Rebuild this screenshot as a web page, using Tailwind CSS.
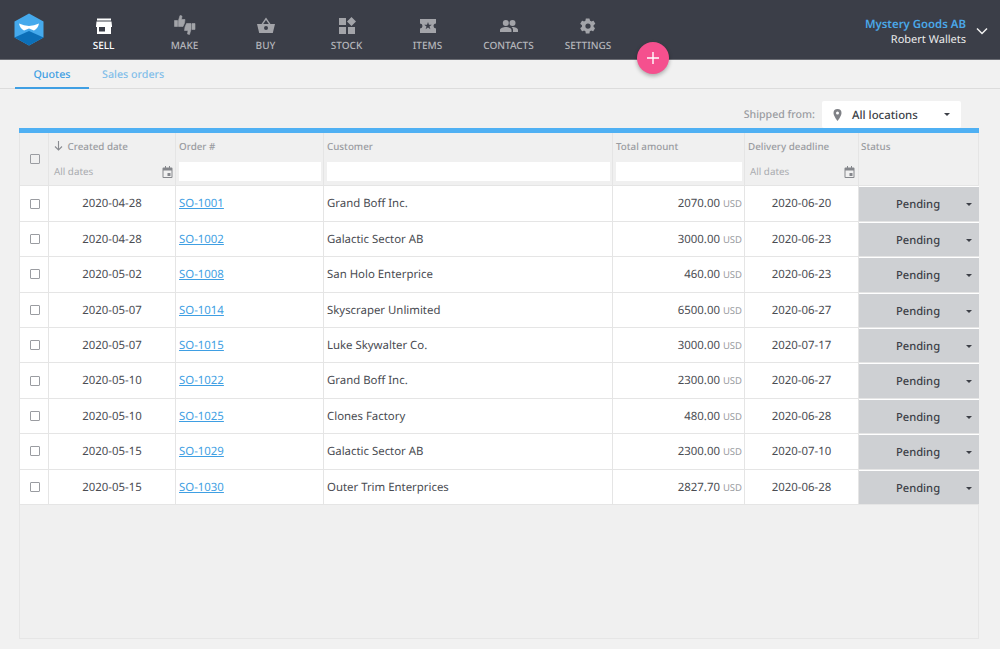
<!DOCTYPE html>
<html><head><meta charset="utf-8"><script src="https://cdn.jsdelivr.net/npm/@tailwindcss/browser@4"></script></head>
<body class="w-[1000px] h-[649px] overflow-hidden bg-[#f1f1f1] font-['Noto_Sans','Open_Sans',sans-serif] [text-rendering:geometricPrecision] text-[#3c3f47] relative">
<header class="h-[60px] bg-[#3b3e48] border-b border-[#6b6d74] flex items-start relative">
  <div class="w-[60px] h-full flex items-center justify-center pr-[2px]">
    <svg width="32" height="33" viewBox="0 0 32 33"><path d="M16 .5 30.500 8.500V24.500L16 32.500 1.500 24.500V8.500Z" fill="#45a9ec"/><path d="M1.500 24.500 16 18 30.500 24.500 16 32.500Z" fill="#0c6fb8"/><path d="M6 10.500 Q11 12.500 16 13 Q21 12.500 26 10.500 Q25 15.500 21 17.500 L16 15.500 L11 17.500 Q7 15.500 6 10.500Z" fill="#fff"/></svg>
  </div>
  <nav class="flex text-[10px] font-medium text-[#b4b5ba] leading-none">
    <a class="w-[81px] ml-[3px] flex flex-col items-center pt-[17px] text-white"><svg width="18" height="18" viewBox="0 0 18 18" fill="#fff"><path d="M2 1.500h14v2H2zM1.500 4.500h15L17 9v1H16v7H2v-7H1V9zM4 10v4.500h6V10z" fill-rule="evenodd"/></svg><span class="mt-[5px]">SELL</span></a>
    <a class="w-[81px] flex flex-col items-center pt-[15px]"><svg width="22" height="20" viewBox="0 0 22 20" fill="#a3a4a9"><path d="M.5 5.500h3V11.500h-3zM4.500 11.500V5.500L6 .5 8 1 7.500 4.500h3.500l-.5 3.500-1.500 3.500z" stroke="#a3a4a9" stroke-width=".6" stroke-linejoin="round"/><path d="M21 8.500h-3V14.500h3zM17 8.500V14.500L15.500 19.500 13.500 19 14 15.500H10.500l.5-3.500 1.500-3.500z" stroke="#a3a4a9" stroke-width=".6" stroke-linejoin="round"/></svg><span class="mt-[5px]">MAKE</span></a>
    <a class="w-[81px] flex flex-col items-center pt-[17px]"><svg width="18" height="18" viewBox="0 0 18 18" fill="#a3a4a9"><path d="M0 7h4.500L9 .5 13.500 7H18l-2.200 9H2.200zM6.200 7h5.600L9 3zM9 9a2 2 0 1 0 0 4 2 2 0 0 0 0-4z" fill-rule="evenodd"/></svg><span class="mt-[5px]">BUY</span></a>
    <a class="w-[81px] flex flex-col items-center pt-[17px]"><svg width="18" height="18" viewBox="0 0 18 18" fill="#a3a4a9"><path d="M1 1h7v7H1zM1 10h7v7H1zM10 10h7v7h-7zM13.500 0 18 4.500 13.500 9 9 4.500z"/></svg><span class="mt-[5px]">STOCK</span></a>
    <a class="w-[81px] flex flex-col items-center pt-[17px]"><svg width="18" height="18" viewBox="0 0 18 18" fill="#a3a4a9"><path d="M1 2h16v4.500a2.500 2.500 0 0 0 0 5V16H1v-4.500a2.500 2.500 0 0 0 0-5zM9 5 8 7.800H5.200l2.300 1.700-.9 2.800L9 10.600l2.400 1.700-.9-2.800 2.300-1.700H10z" fill-rule="evenodd"/></svg><span class="mt-[5px]">ITEMS</span></a>
    <a class="w-[81px] flex flex-col items-center pt-[17px]"><svg width="18" height="18" viewBox="0 0 18 18" fill="#a3a4a9"><circle cx="5.800" cy="6" r="3"/><circle cx="12.500" cy="6" r="3"/><path d="M0 15v-2c0-2 3.500-3 5.800-3s5.700 1 5.700 3v2zM13 15v-2c0-1.200-.5-2.200-1.500-3 .4-.1.800-.1 1.200-.1 2.200 0 5.300 1 5.300 3.100v2z"/></svg><span class="mt-[5px]">CONTACTS</span></a>
    <a class="w-[78px] flex flex-col items-center pt-[17px]"><svg width="18" height="18" viewBox="0 0 24 24" fill="#a3a4a9"><path d="M19.400 13c.1-.3.100-.7.100-1s0-.7-.1-1l2.100-1.600c.2-.2.200-.4.100-.6l-2-3.500c-.1-.2-.4-.3-.6-.2l-2.500 1c-.5-.4-1.100-.7-1.700-1L14 2.400c0-.2-.2-.4-.5-.4h-4c-.2 0-.5.2-.5.400l-.4 2.700c-.6.200-1.200.6-1.700 1l-2.500-1c-.2-.1-.5 0-.6.200l-2 3.500c-.1.200 0 .4.100.6L4 11c0 .3-.1.700-.1 1s0 .7.100 1l-2.100 1.600c-.2.200-.2.400-.1.600l2 3.500c.1.200.4.300.6.200l2.500-1c.5.400 1.100.7 1.700 1l.4 2.700c0 .2.300.4.500.4h4c.3 0 .5-.2.500-.4l.4-2.700c.6-.2 1.200-.6 1.700-1l2.500 1c.2.100.5 0 .6-.2l2-3.500c.1-.2 0-.4-.1-.6zM12 15.500a3.500 3.500 0 1 1 0-7 3.500 3.500 0 0 1 0 7z"/></svg><span class="mt-[5px]">SETTINGS</span></a>
  </nav>
  <div class="ml-auto flex items-center pt-[18px] pr-[12px]">
    <div class="text-right leading-[15px] mr-[10px] mt-[-1px]"><div class="text-[#4aa8e8] font-semibold text-[11.400px]">Mystery Goods AB</div><div class="text-[#ececed] text-[11px]">Robert Wallets</div></div>
    <svg class="-mt-[4px]" width="12" height="8" viewBox="0 0 12 8" fill="none" stroke="#f1f1f1" stroke-width="1.500"><path d="M1 1.500 6 6.500 11 1.500"/></svg>
  </div>
</header>
<button class="absolute left-[637px] top-[42px] w-8 h-8 rounded-full bg-[#f5508e] shadow-[0_2px_4px_rgba(0,0,0,.3)] flex items-center justify-center"><svg width="12" height="12" viewBox="0 0 12 12" stroke="#fff" stroke-width="1.400"><path d="M6 0v12M0 6h12"/></svg></button>
<div class="h-[29px] border-b border-[#dcdcdc] pl-[15px] flex text-[10.700px] font-medium">
  <a class="w-[74px] h-[29px] border-b-[2px] border-[#3f9fe3] text-[#3f9fe3] text-center leading-[31px]">Quotes</a>
  <a class="ml-[13px] text-[#82bee9] leading-[31px]">Sales orders</a>
</div>
<div class="h-[39px] flex items-end justify-end pr-[39px]">
  <span class="text-[10.600px] font-medium text-[#9a9ca1] mr-[7px] leading-[29px] h-[27px]">Shipped from:</span>
  <div class="w-[139px] h-[27px] bg-white rounded-[2px] flex items-center pl-[11px] pr-[11px] text-[#3c3f47] text-[11.400px] font-medium">
    <svg width="9" height="12" viewBox="0 0 9 12" fill="#7f8186"><path d="M4.500 0A4 4 0 0 0 .5 4C.5 7 4.500 12 4.500 12S8.500 7 8.500 4A4 4 0 0 0 4.500 0zM4.500 5.500a1.500 1.500 0 1 1 0-3 1.500 1.500 0 0 1 0 3z"/></svg>
    <span class="ml-[10px] mt-[2px]">All locations</span><span class="ml-auto w-0 h-0 border-x-[3px] border-x-transparent border-t-[3px] border-t-[#3c3f47]"></span>
  </div>
</div>
<main class="mx-[19px] w-[960px] h-[511px] bg-[#f0f0f0] border-t-[5px] border-[#4fb0f3] shadow-[inset_-1px_0_#e6e6e6,inset_1px_0_#e6e6e6,inset_0_-1px_#e6e6e6]">
  <div class="grid grid-cols-[30px_127px_148px_289px_132px_114px_120px] h-[53.400px] text-[9.800px] font-medium text-[#9a9ca1] border-b border-[#e5e5e5] leading-none">
    <div class="border-x border-[#e5e5e5] flex items-center justify-center pl-[1px]"><span class="w-[10px] h-[10px] border-[1.500px] border-[#9a9ca1] rounded-[1px]"></span></div>
    <div class="border-r border-[#e5e5e5] pl-[5px] pr-[2px] flex flex-col"><div class="h-[27px] flex items-center"><svg class="-mt-[1px]" width="9" height="10" viewBox="0 0 9 10" fill="none" stroke="#8a8c91" stroke-width="1.100"><path d="M4.500 0v9M1 5.500 4.500 9 8 5.500"/></svg><span class="ml-[4.500px]">Created date</span></div><div class="flex items-center justify-between h-[23px] font-normal text-[#a9abaf]"><span>All dates</span><svg width="11" height="12" viewBox="0 0 11 12" fill="#85878c"><path d="M1.500 1.500H3V0h1v1.500h3V0h1v1.500h1.500a1 1 0 0 1 1 1V11a1 1 0 0 1-1 1h-8a1 1 0 0 1-1-1V2.500a1 1 0 0 1 1-1zM1.500 4.500V11h8V4.500zM5.500 7h3v3h-3z" fill-rule="evenodd"/></svg></div></div>
    <div class="border-r border-[#e5e5e5] pl-[3px] pr-[2px] flex flex-col"><div class="h-[27px] mb-[2px] flex items-center">Order #</div><div class="h-[19px] bg-white"></div></div>
    <div class="border-r border-[#e5e5e5] pl-[3px] pr-[2px] flex flex-col"><div class="h-[27px] mb-[2px] flex items-center">Customer</div><div class="h-[19px] bg-white"></div></div>
    <div class="border-r border-[#e5e5e5] pl-[3px] pr-[2px] flex flex-col"><div class="h-[27px] mb-[2px] flex items-center">Total amount</div><div class="h-[19px] bg-white"></div></div>
    <div class="border-r border-[#e5e5e5] pl-[3px] pr-[3px] flex flex-col"><div class="h-[27px] flex items-center">Delivery deadline</div><div class="flex items-center justify-between h-[23px] font-normal text-[#a9abaf] pl-[2px]"><span>All dates</span><svg width="11" height="12" viewBox="0 0 11 12" fill="#85878c"><path d="M1.500 1.500H3V0h1v1.500h3V0h1v1.500h1.500a1 1 0 0 1 1 1V11a1 1 0 0 1-1 1h-8a1 1 0 0 1-1-1V2.500a1 1 0 0 1 1-1zM1.500 4.500V11h8V4.500zM5.500 7h3v3h-3z" fill-rule="evenodd"/></svg></div></div>
    <div class="border-r border-[#e5e5e5] px-[2px] flex flex-col"><div class="h-[27px] flex items-center">Status</div></div>
  </div>
  <div class="text-[11.400px] text-[#4a4c52]">
    <div class="grid grid-cols-[30px_127px_148px_289px_132px_114px_120px] grid-rows-[34.400px] h-[35.400px] bg-white border-b border-[#e5e5e5] items-stretch leading-[36px]"><div class="border-x border-[#e5e5e5] flex items-center justify-center pl-[1px]"><span class="w-[10px] h-[10px] border-[1.500px] border-[#9a9ca1] rounded-[1px]"></span></div><div class="border-r border-[#e5e5e5] text-center">2020-04-28</div><div class="border-r border-[#e5e5e5] pl-[3px]"><a class="text-[#3f9fe3] underline">SO-1001</a></div><div class="border-r border-[#e5e5e5] pl-[3px]">Grand Boff Inc.</div><div class="border-r border-[#e5e5e5] text-right pr-[2px]">2070.00 <span class="text-[9.500px] text-[#9a9ca1]">USD</span></div><div class="border-r border-[#e5e5e5] text-center">2020-06-20</div><div class="bg-[#ced0d3] mt-[1px] flex items-center justify-center relative font-medium text-[11.200px] text-[#3c3f47] leading-none pr-[2px] pt-[2px]">Pending<span class="absolute right-[7px] top-[16px] border-x-[3px] border-x-transparent border-t-[3px] border-t-[#3c3f47]"></span></div></div>
    <div class="grid grid-cols-[30px_127px_148px_289px_132px_114px_120px] grid-rows-[34.400px] h-[35.400px] bg-white border-b border-[#e5e5e5] items-stretch leading-[36px]"><div class="border-x border-[#e5e5e5] flex items-center justify-center pl-[1px]"><span class="w-[10px] h-[10px] border-[1.500px] border-[#9a9ca1] rounded-[1px]"></span></div><div class="border-r border-[#e5e5e5] text-center">2020-04-28</div><div class="border-r border-[#e5e5e5] pl-[3px]"><a class="text-[#3f9fe3] underline">SO-1002</a></div><div class="border-r border-[#e5e5e5] pl-[3px]">Galactic Sector AB</div><div class="border-r border-[#e5e5e5] text-right pr-[2px]">3000.00 <span class="text-[9.500px] text-[#9a9ca1]">USD</span></div><div class="border-r border-[#e5e5e5] text-center">2020-06-23</div><div class="bg-[#ced0d3] mt-[1px] flex items-center justify-center relative font-medium text-[11.200px] text-[#3c3f47] leading-none pr-[2px] pt-[2px]">Pending<span class="absolute right-[7px] top-[16px] border-x-[3px] border-x-transparent border-t-[3px] border-t-[#3c3f47]"></span></div></div>
    <div class="grid grid-cols-[30px_127px_148px_289px_132px_114px_120px] grid-rows-[34.400px] h-[35.400px] bg-white border-b border-[#e5e5e5] items-stretch leading-[36px]"><div class="border-x border-[#e5e5e5] flex items-center justify-center pl-[1px]"><span class="w-[10px] h-[10px] border-[1.500px] border-[#9a9ca1] rounded-[1px]"></span></div><div class="border-r border-[#e5e5e5] text-center">2020-05-02</div><div class="border-r border-[#e5e5e5] pl-[3px]"><a class="text-[#3f9fe3] underline">SO-1008</a></div><div class="border-r border-[#e5e5e5] pl-[3px]">San Holo Enterprice</div><div class="border-r border-[#e5e5e5] text-right pr-[2px]">460.00 <span class="text-[9.500px] text-[#9a9ca1]">USD</span></div><div class="border-r border-[#e5e5e5] text-center">2020-06-23</div><div class="bg-[#ced0d3] mt-[1px] flex items-center justify-center relative font-medium text-[11.200px] text-[#3c3f47] leading-none pr-[2px] pt-[2px]">Pending<span class="absolute right-[7px] top-[16px] border-x-[3px] border-x-transparent border-t-[3px] border-t-[#3c3f47]"></span></div></div>
    <div class="grid grid-cols-[30px_127px_148px_289px_132px_114px_120px] grid-rows-[34.400px] h-[35.400px] bg-white border-b border-[#e5e5e5] items-stretch leading-[36px]"><div class="border-x border-[#e5e5e5] flex items-center justify-center pl-[1px]"><span class="w-[10px] h-[10px] border-[1.500px] border-[#9a9ca1] rounded-[1px]"></span></div><div class="border-r border-[#e5e5e5] text-center">2020-05-07</div><div class="border-r border-[#e5e5e5] pl-[3px]"><a class="text-[#3f9fe3] underline">SO-1014</a></div><div class="border-r border-[#e5e5e5] pl-[3px]">Skyscraper Unlimited</div><div class="border-r border-[#e5e5e5] text-right pr-[2px]">6500.00 <span class="text-[9.500px] text-[#9a9ca1]">USD</span></div><div class="border-r border-[#e5e5e5] text-center">2020-06-27</div><div class="bg-[#ced0d3] mt-[1px] flex items-center justify-center relative font-medium text-[11.200px] text-[#3c3f47] leading-none pr-[2px] pt-[2px]">Pending<span class="absolute right-[7px] top-[16px] border-x-[3px] border-x-transparent border-t-[3px] border-t-[#3c3f47]"></span></div></div>
    <div class="grid grid-cols-[30px_127px_148px_289px_132px_114px_120px] grid-rows-[34.400px] h-[35.400px] bg-white border-b border-[#e5e5e5] items-stretch leading-[36px]"><div class="border-x border-[#e5e5e5] flex items-center justify-center pl-[1px]"><span class="w-[10px] h-[10px] border-[1.500px] border-[#9a9ca1] rounded-[1px]"></span></div><div class="border-r border-[#e5e5e5] text-center">2020-05-07</div><div class="border-r border-[#e5e5e5] pl-[3px]"><a class="text-[#3f9fe3] underline">SO-1015</a></div><div class="border-r border-[#e5e5e5] pl-[3px]">Luke Skywalter Co.</div><div class="border-r border-[#e5e5e5] text-right pr-[2px]">3000.00 <span class="text-[9.500px] text-[#9a9ca1]">USD</span></div><div class="border-r border-[#e5e5e5] text-center">2020-07-17</div><div class="bg-[#ced0d3] mt-[1px] flex items-center justify-center relative font-medium text-[11.200px] text-[#3c3f47] leading-none pr-[2px] pt-[2px]">Pending<span class="absolute right-[7px] top-[16px] border-x-[3px] border-x-transparent border-t-[3px] border-t-[#3c3f47]"></span></div></div>
    <div class="grid grid-cols-[30px_127px_148px_289px_132px_114px_120px] grid-rows-[34.400px] h-[35.400px] bg-white border-b border-[#e5e5e5] items-stretch leading-[36px]"><div class="border-x border-[#e5e5e5] flex items-center justify-center pl-[1px]"><span class="w-[10px] h-[10px] border-[1.500px] border-[#9a9ca1] rounded-[1px]"></span></div><div class="border-r border-[#e5e5e5] text-center">2020-05-10</div><div class="border-r border-[#e5e5e5] pl-[3px]"><a class="text-[#3f9fe3] underline">SO-1022</a></div><div class="border-r border-[#e5e5e5] pl-[3px]">Grand Boff Inc.</div><div class="border-r border-[#e5e5e5] text-right pr-[2px]">2300.00 <span class="text-[9.500px] text-[#9a9ca1]">USD</span></div><div class="border-r border-[#e5e5e5] text-center">2020-06-27</div><div class="bg-[#ced0d3] mt-[1px] flex items-center justify-center relative font-medium text-[11.200px] text-[#3c3f47] leading-none pr-[2px] pt-[2px]">Pending<span class="absolute right-[7px] top-[16px] border-x-[3px] border-x-transparent border-t-[3px] border-t-[#3c3f47]"></span></div></div>
    <div class="grid grid-cols-[30px_127px_148px_289px_132px_114px_120px] grid-rows-[34.400px] h-[35.400px] bg-white border-b border-[#e5e5e5] items-stretch leading-[36px]"><div class="border-x border-[#e5e5e5] flex items-center justify-center pl-[1px]"><span class="w-[10px] h-[10px] border-[1.500px] border-[#9a9ca1] rounded-[1px]"></span></div><div class="border-r border-[#e5e5e5] text-center">2020-05-10</div><div class="border-r border-[#e5e5e5] pl-[3px]"><a class="text-[#3f9fe3] underline">SO-1025</a></div><div class="border-r border-[#e5e5e5] pl-[3px]">Clones Factory</div><div class="border-r border-[#e5e5e5] text-right pr-[2px]">480.00 <span class="text-[9.500px] text-[#9a9ca1]">USD</span></div><div class="border-r border-[#e5e5e5] text-center">2020-06-28</div><div class="bg-[#ced0d3] mt-[1px] flex items-center justify-center relative font-medium text-[11.200px] text-[#3c3f47] leading-none pr-[2px] pt-[2px]">Pending<span class="absolute right-[7px] top-[16px] border-x-[3px] border-x-transparent border-t-[3px] border-t-[#3c3f47]"></span></div></div>
    <div class="grid grid-cols-[30px_127px_148px_289px_132px_114px_120px] grid-rows-[34.400px] h-[35.400px] bg-white border-b border-[#e5e5e5] items-stretch leading-[36px]"><div class="border-x border-[#e5e5e5] flex items-center justify-center pl-[1px]"><span class="w-[10px] h-[10px] border-[1.500px] border-[#9a9ca1] rounded-[1px]"></span></div><div class="border-r border-[#e5e5e5] text-center">2020-05-15</div><div class="border-r border-[#e5e5e5] pl-[3px]"><a class="text-[#3f9fe3] underline">SO-1029</a></div><div class="border-r border-[#e5e5e5] pl-[3px]">Galactic Sector AB</div><div class="border-r border-[#e5e5e5] text-right pr-[2px]">2300.00 <span class="text-[9.500px] text-[#9a9ca1]">USD</span></div><div class="border-r border-[#e5e5e5] text-center">2020-07-10</div><div class="bg-[#ced0d3] mt-[1px] flex items-center justify-center relative font-medium text-[11.200px] text-[#3c3f47] leading-none pr-[2px] pt-[2px]">Pending<span class="absolute right-[7px] top-[16px] border-x-[3px] border-x-transparent border-t-[3px] border-t-[#3c3f47]"></span></div></div>
    <div class="grid grid-cols-[30px_127px_148px_289px_132px_114px_120px] grid-rows-[34.400px] h-[35.400px] bg-white border-b border-[#e5e5e5] items-stretch leading-[36px]"><div class="border-x border-[#e5e5e5] flex items-center justify-center pl-[1px]"><span class="w-[10px] h-[10px] border-[1.500px] border-[#9a9ca1] rounded-[1px]"></span></div><div class="border-r border-[#e5e5e5] text-center">2020-05-15</div><div class="border-r border-[#e5e5e5] pl-[3px]"><a class="text-[#3f9fe3] underline">SO-1030</a></div><div class="border-r border-[#e5e5e5] pl-[3px]">Outer Trim Enterprices</div><div class="border-r border-[#e5e5e5] text-right pr-[2px]">2827.70 <span class="text-[9.500px] text-[#9a9ca1]">USD</span></div><div class="border-r border-[#e5e5e5] text-center">2020-06-28</div><div class="bg-[#ced0d3] mt-[1px] flex items-center justify-center relative font-medium text-[11.200px] text-[#3c3f47] leading-none pr-[2px] pt-[2px]">Pending<span class="absolute right-[7px] top-[16px] border-x-[3px] border-x-transparent border-t-[3px] border-t-[#3c3f47]"></span></div></div>
  </div>
</main>
</body></html>
